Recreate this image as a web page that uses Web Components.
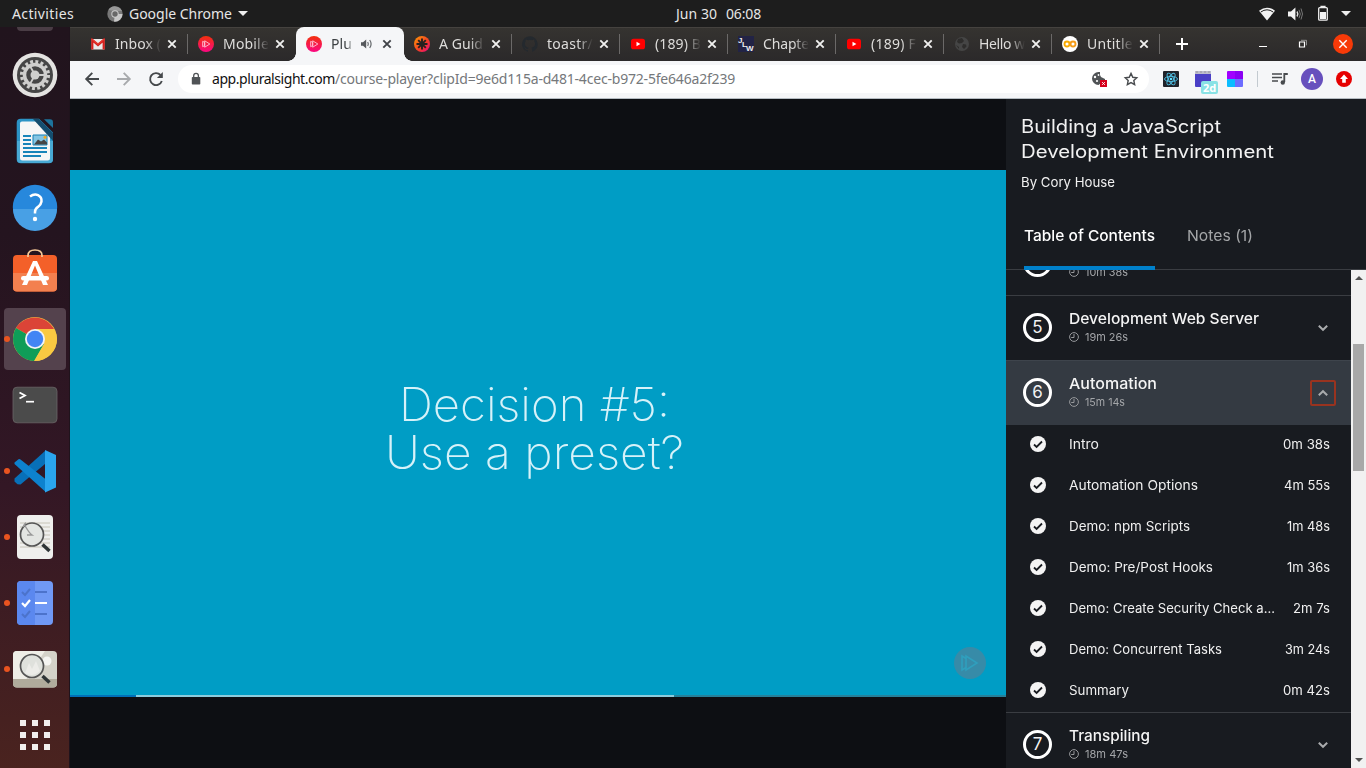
<!DOCTYPE html>
<html lang="en">
<head>
<meta charset="utf-8">
<title>Building a JavaScript Development Environment</title>
<style>
html,body{margin:0;height:100%;overflow:hidden;background:#0d0f13}
</style>
</head>
<body>
<desktop-shell></desktop-shell>
<script>
// Registers a component whose shadow root is produced by render(element).
function component(tag, render) {
  customElements.define(tag, class extends HTMLElement {
    constructor() { super(); this.attachShadow({ mode: 'open' }); }
    connectedCallback() {
      if (this.shadowRoot.firstChild) return;
      const t = document.createElement('template');
      t.innerHTML = '<style>*{box-sizing:border-box}svg{display:block;flex:none;overflow:visible}</style>' + render(this);
      this.shadowRoot.append(t.content.cloneNode(true));
    }
  });
}
const at = (el, n, d = '') => el.getAttribute(n) ?? d;

component('desktop-shell', () => `
<style>
:host{display:grid;grid-template:27px 741px / 70px 1296px;width:1366px;height:768px;overflow:hidden}
system-bar{grid-column:1 / 3}
</style>
<system-bar></system-bar><app-dock></app-dock><browser-window></browser-window>`);

component('system-bar', () => `
<style>
:host{display:grid;grid-template-columns:605px 1fr auto;align-items:center;height:27px;background:#1d1d1d;color:#e6e6e6;font:14px/26px "Noto Sans","Open Sans",sans-serif}
.l{display:flex;align-items:center;padding-left:12px}
.l svg.c{margin:0 6px 0 33px}.l svg.a{margin-left:6px}
.m{display:flex;gap:9px;padding-left:71px}
.r{display:flex;align-items:center;justify-content:flex-end;padding-right:15px}
</style>
<div class="l"><fit-text w="62">Activities</fit-text>
<svg class="c" width="16" height="16" viewBox="0 0 16 16"><circle cx="8" cy="8" r="7.7" fill="#777"/><path d="M8 8h7.5A7.7 7.7 0 0 1 7 15.6z" fill="#c7c7c7"/><path d="M1.4 4A7.7 7.7 0 0 1 15 5H8z" fill="#979797"/><circle cx="8" cy="8" r="3.7" fill="#ccc"/><circle cx="8" cy="8" r="2.7" fill="#686868"/></svg>
<fit-text w="103">Google Chrome</fit-text>
<svg class="a" width="10" height="5" viewBox="0 0 10 5"><path d="M0 0h10L5 5z" fill="#eee"/></svg></div>
<div class="m"><fit-text w="41">Jun 30</fit-text><fit-text w="35">06:08</fit-text></div>
<div class="r">
<svg width="16" height="14" viewBox="0 0 16 14"><path d="M0 3.7Q8-2.4 16 3.7L8 13.5z" fill="#f2f2f2"/><path d="M1.8 5Q8 .6 14.2 5" fill="none" stroke="#1d1d1d" stroke-width="1"/></svg>
<svg style="margin-left:13px" width="15" height="14" viewBox="0 0 15 14"><path d="M0 4.5h3L7.4.5v13L3 9.5H0z" fill="#f2f2f2"/><path d="M9 4.5q1.6 2.5 0 5" fill="none" stroke="#ddd" stroke-width="1.4"/><path d="M11 2.8q2.6 4.2 0 8.4M13 1.5q3 5.5 0 11" fill="none" stroke="#777" stroke-width="1"/></svg>
<svg style="margin-left:15px" width="10" height="15" viewBox="0 0 10 15"><path d="M3 1.4V.4h4v1" fill="none" stroke="#eee" stroke-width="1.2"/><rect x=".7" y="1.6" width="8.6" height="12.6" rx="1" fill="none" stroke="#eee" stroke-width="1.3"/><path d="M2 6h6v7H2z" fill="#f2f2f2"/></svg>
<svg style="margin-left:13px" width="10" height="5" viewBox="0 0 10 5"><path d="M0 0h10L5 5z" fill="#eee"/></svg></div>`);

const dockIcons = {
settings: `<circle cx="22" cy="22" r="22.3" fill="#e4e3e1"/><circle cx="22" cy="22" r="18" fill="#464646"/><circle cx="22" cy="22" r="13.4" fill="none" stroke="#cfcfcd" stroke-width="3.3" stroke-dasharray="2.9 2.36"/><circle cx="22" cy="22" r="10.5" fill="none" stroke="#cfcfcd" stroke-width="3.5"/><circle cx="22" cy="22" r="4.5" fill="#cfcfcd"/><path d="M22 22h10M22 22l-5-9M22 22l-5 9" stroke="#cfcfcd" stroke-width="1.8"/>`,
writer: `<path d="M7.500-.3h18.500L40 13.500V40.200a4 4 0 0 1-4 4H7.700a4 4 0 0 1-4-4V3.700a4 4 0 0 1 4-4z" fill="#2b93c5"/><path d="M4 22h36v18a4 4 0 0 1-4 4H8a4 4 0 0 1-4-4z" fill="#48a9d4"/><path d="M9 2.500h16L37 14.800V39a2.500 2.500 0 0 1-2.500 2.500h-25A2.500 2.500 0 0 1 7 39V4.500a2 2 0 0 1 2-2z" fill="#f6f6f6"/><path d="M26 0l14 14V22L20 0z" fill="#154d6e"/><path d="M31 .2h6a3 3 0 0 1 3 3V9z" fill="#1d749d"/><path d="M10 17h8M10 21h8M10 25h8M10 29h24M10 33h24M10 37h18" stroke="#1884b9" stroke-width="1.8"/><path d="M20 16h14v10H20z" fill="#83c5e3" stroke="#1680b4"/><path d="M21 25.500l4-5 3 2 3-2 3 3v2z" fill="#454545"/><circle cx="32" cy="18.300" r="1.500" fill="#f3a71f"/>`,
help: `<circle cx="22" cy="22" r="22.2" fill="#2788dc"/><path d="M0 24h44a22 22 0 0 1-44 0z" fill="#48a0e5"/><path d="M17 11.500q4-3 8-1.400 4 2 3.500 6.400-.4 3-3.500 5.400-3 2-3 5v1.500" fill="none" stroke="#fff" stroke-width="2.500"/><circle cx="22" cy="34" r="2.200" fill="#fff"/>`,
store: `<rect y="4" width="44" height="36.500" rx="4" fill="#f46029"/><path d="M0 22h44v14.500a4 4 0 0 1-4 4H4a4 4 0 0 1-4-4z" fill="#f3804f"/><path d="M15 6v-1.500Q15-1 22-1t7 5.500V6" fill="none" stroke="#f6c998" stroke-width="1.700"/><path d="M9 34L20 10h4l11 24h-5L22 14.500 14 34z" fill="#fff"/><rect x="8" y="25" width="28" height="4.500" rx="2.200" fill="#fff"/>`,
chrome: `<circle cx="22" cy="22" r="22" fill="#f9c942"/><path d="M22 22L3 11A22 22 0 0 1 41 12H22z" fill="#db4437"/><path d="M22 22L3 11A22 22 0 0 0 21 44l10-17z" fill="#0f9d58"/><path d="M22 12h19Q44 17 44 22A22 22 0 0 1 21.500 44L31 27z" fill="#f9c942"/><circle cx="22" cy="22" r="10" fill="#f2f3f5"/><circle cx="22" cy="22" r="8.200" fill="#4285f4"/>`,
terminal: `<rect y="4.200" width="44" height="35.600" rx="4" fill="#4b4b4b" stroke="#6b6667" stroke-width=".8"/><path d="M6.500 9.500L12 12.500l-5.500 3" fill="none" stroke="#fff" stroke-width="1.800"/><path d="M13 18.700h8" stroke="#fff" stroke-width="1.700"/>`,
code: `<path d="M32 2L1.500 29.500v3l3 2.700 3 .4L32 15z" fill="#0870b8"/><path d="M1.500 13.500l4-3.300q1-.5 2 .2L33 30.500v12.700L1.500 15z" fill="#0d82ce"/><path d="M32 1l11 5v32.500l-11 5z" fill="#2aa5ee"/>`,
viewer: `<rect x="4" width="36" height="44" rx="4" fill="#efefed"/><path d="M7 8h30M7 12h30M7 16h30M7 20h30M7 24h30M7 28h30M7 32h30" stroke="#c7c4b8"/><circle cx="19" cy="19.500" r="11.500" fill="#e3e5e2" stroke="#555" stroke-width="1.700"/><path d="M11 9q5 9 8 11h-5M10 12q2-4 3-4" fill="none" stroke="#999" stroke-width="1.400"/><path d="M29.500 29.500l7 6.500" stroke="#2e3436" stroke-width="3.500"/>`,
todo: `<rect x="4" width="36" height="44" rx="4" fill="#7099f5"/><path d="M8 0h14v44H8a4 4 0 0 1-4-4V4a4 4 0 0 1 4-4z" fill="#5b88ef"/><path d="M9 11l3 3 5-6M9 33l3 3 5-6M22 11h12M22 33h12" fill="none" stroke="#4c73cb" stroke-width="2"/><path d="M9 22l3 3 5-6M22 22h12" fill="none" stroke="#fff" stroke-width="2.200"/>`,
image: `<rect y="4" width="44" height="36.500" rx="4" fill="#d4d2c9"/><path d="M4 4h28L12 34H0V8a4 4 0 0 1 4-4z" fill="#efeee7"/><path d="M0 32h44v4.500a4 4 0 0 1-4 4H4a4 4 0 0 1-4-4z" fill="#b0ab9c"/><circle cx="34" cy="14" r="4.500" fill="#f5f5f2"/><circle cx="19" cy="19" r="11.500" fill="#dfe1dc" stroke="#555" stroke-width="1.700"/><path d="M12 26l4-10 3 6 4-8 4 10q-7 7-15 2z" fill="#ecece8"/><path d="M29.500 29l7 6.500" stroke="#2e3436" stroke-width="3.500"/>`,
apps: `<path d="M7 7h6v6H7zM19 7h6v6h-6zM31 7h6v6h-6zM7 19h6v6H7zM19 19h6v6h-6zM31 19h6v6h-6zM7 31h6v6H7zM19 31h6v6h-6zM31 31h6v6h-6z" fill="#f2f0ee"/>`
};
component('dock-item', el => `
<style>
:host{display:grid;grid-template-columns:4px 62px 4px;align-items:center;height:66px}
.tile{grid-column:2;display:grid;place-items:center;height:62px;border-radius:4px;position:relative}
:host([active]) .tile{background:#54424d}
.dot{position:absolute;left:0;top:28px;width:6px;height:6px;border-radius:50%;background:#e95420}
:host(:not([running])) .dot{display:none}
</style><div class="tile"><span class="dot"></span><svg width="44" height="44" viewBox="0 0 44 44">${dockIcons[at(el,'icon')]}</svg></div>`);
component('app-dock', () => `
<style>
:host{display:block;height:741px;background:linear-gradient(#21141d,#24141f 28%,#331725 62%,#4a231f);overflow:hidden;border-right:1px solid #1f131c}
.peek{width:36px;height:4px;background:#4a3d45;border-radius:0 0 5px 5px;margin:0 0 11px 17px}
dock-item{width:70px}
</style><div class="peek"></div>
<dock-item icon="settings"></dock-item><dock-item icon="writer"></dock-item><dock-item icon="help"></dock-item><dock-item icon="store"></dock-item>
<dock-item icon="chrome" active running></dock-item><dock-item icon="terminal"></dock-item><dock-item icon="code" running></dock-item>
<dock-item icon="viewer" running></dock-item><dock-item icon="todo" running></dock-item><dock-item icon="image" running></dock-item><dock-item icon="apps"></dock-item>`);

const ps = `<defs><linearGradient id="g" x2="0" y2="1"><stop stop-color="#f2300c"/><stop offset="1" stop-color="#fb0782"/></linearGradient></defs><circle cx="8" cy="8" r="8" fill="url(#g)"/><path d="M4.700 5.300v5.400l2-1.200V6.500zM6.700 4.800v6.400l5.100-3.200z" fill="none" stroke="#ffc4d8" stroke-width=".9"/>`;
const yt = `<rect x="1" y="2.700" width="14" height="10.600" rx="2.600" fill="#f00"/><path d="M6.500 5.700v4.600L10.400 8z" fill="#fff"/>`;
const favicons = {
gmail: `<path d="M1.500 3h13v10.500h-13z" fill="#e9e9e9"/><path d="M2.300 13.500V4.200L8 9l5.700-4.800v9.300" fill="none" stroke="#d5201d" stroke-width="2.200"/><path d="M1.800 3L8 8l6.200-5" fill="none" stroke="#e53a31" stroke-width="1.400"/>`,
ps, yt,
guide: `<defs><linearGradient id="g" x2="1" y2="1"><stop stop-color="#ff9c00"/><stop offset=".6" stop-color="#f23a2b"/><stop offset="1" stop-color="#ec008c"/></linearGradient></defs><circle cx="8" cy="8" r="8" fill="url(#g)"/><path d="M8 2.500v11M2.500 8h11M4.200 4.200l7.600 7.600M11.800 4.200l-7.600 7.600" stroke="#26211f" stroke-width="1.900"/>`,
github: `<path d="M8 .2a8 8 0 0 0-2.500 15.600c.4.100.5-.2.500-.4v-1.500c-2.200.5-2.700-1-2.700-1-.4-.9-.9-1.200-.9-1.200-.7-.5 0-.5 0-.5.8.100 1.300.8 1.300.8.7 1.300 1.900.9 2.300.7.100-.5.300-.9.500-1.100-1.800-.2-3.600-.9-3.600-4 0-.9.300-1.600.8-2.100-.1-.2-.4-1 .1-2.100 0 0 .7-.2 2.200.8a7.500 7.500 0 0 1 4 0c1.500-1 2.200-.8 2.200-.8.4 1.100.2 1.900.1 2.100.5.600.8 1.300.8 2.100 0 3.100-1.900 3.800-3.700 4 .3.300.6.800.6 1.500v2.200c0 .2.100.5.500.4A8 8 0 0 0 8 .2z" fill="#24292e"/>`,
jlw: `<rect width="16" height="16" fill="#222345"/><g font-family="Liberation Sans,sans-serif" font-weight="700" fill="#eee" font-size="8"><text x="0" y="7">J</text><text x="4" y="11">L</text><text x="8" y="15">W</text></g>`,
globe: `<circle cx="8" cy="8" r="7" fill="#454545"/><path d="M4 3l4-1 2 3-2 2-3 .5L3 6zM9 8l3 .5.5 2L10 13l-2-2zM2 9l3 2v2z" fill="#2e2d2c"/>`,
colab: `<circle cx="8" cy="8" r="8" fill="#fff"/><circle cx="5" cy="8" r="2.500" fill="none" stroke="#f9ab00" stroke-width="1.900"/><circle cx="11" cy="8" r="2.500" fill="none" stroke="#f59c1a" stroke-width="1.900"/>`
};
component('browser-tab', el => `
<style>
:host{display:flex;align-items:center;width:108px;height:34px;padding:0 10px;position:relative;color:#dedddb;font:14px/34px "Noto Sans","Open Sans",sans-serif}
.t{width:46px;margin:0 6px 0 9px;overflow:hidden;white-space:nowrap;-webkit-mask-image:linear-gradient(90deg,#000 66%,transparent);mask-image:linear-gradient(90deg,#000 66%,transparent)}
.sep{position:absolute;right:0;top:7px;width:1px;height:20px;background:#6b6968}
:host([nosep]) .sep{display:none}
:host([active]){color:#3c4043;background:#f5f6f8;border-radius:8px 8px 0 0;z-index:1}
:host([active]) .t{width:23px;margin-right:7px}
.x{stroke:#f0f0ef}:host([active]) .x{stroke:#404348}
.flare{position:absolute;bottom:0;width:8px;height:8px}
.flare.a{left:-8px;background:radial-gradient(circle at 0 0,transparent 7.500px,#f5f6f8 8px)}
.flare.b{right:-8px;background:radial-gradient(circle at 100% 0,transparent 7.500px,#f5f6f8 8px)}
:host(:not([active])) .flare{display:none}
</style>
<span class="flare a"></span><span class="flare b"></span>
<svg width="16" height="16" viewBox="0 0 16 16">${favicons[at(el,'icon')]}</svg>
<span class="t"><slot></slot></span>
${el.hasAttribute('active') ? '<svg style="margin-right:10px" width="11" height="10" viewBox="0 0 11 10"><path d="M0 3.300h2L5.200.4v9.200L2 6.700H0z" fill="#55585c"/><path d="M6.700 3q1.300 2 0 4M8.700 1q2.800 4 0 8" fill="none" stroke="#65686c" stroke-width="1.200"/></svg>' : ''}
<svg class="x" width="10" height="10" viewBox="0 0 10 10"><path d="M1.300 1.300l7.400 7.400M8.700 1.300L1.300 8.700" stroke-width="1.900"/></svg><span class="sep"></span>`);

component('tab-strip', () => `
<style>
:host{display:flex;align-items:center;height:34px;background:linear-gradient(#45423f 0 1px,#353330 1px,#2b292a);padding-left:10px}
.add{margin-left:16px}.min{margin-left:71px}.res{margin-left:32px}.cls{margin-left:26px}
</style>
<browser-tab icon="gmail"><fit-text w="46">Inbox (</fit-text></browser-tab>
<browser-tab icon="ps" nosep><fit-text w="46">Mobile</fit-text></browser-tab>
<browser-tab icon="ps" active nosep><fit-text w="21">Plu</fit-text></browser-tab>
<browser-tab icon="guide"><fit-text w="44">A Guid</fit-text></browser-tab>
<browser-tab icon="github"><fit-text w="46">toastr/</fit-text></browser-tab>
<browser-tab icon="yt"><fit-text w="46">(189) B</fit-text></browser-tab>
<browser-tab icon="jlw"><fit-text w="46">Chapte</fit-text></browser-tab>
<browser-tab icon="yt"><fit-text w="45">(189) F</fit-text></browser-tab>
<browser-tab icon="globe"><fit-text w="46">Hello w</fit-text></browser-tab>
<browser-tab icon="colab"><fit-text w="46">Untitle</fit-text></browser-tab>
<svg class="add" width="12" height="12" viewBox="0 0 12 12"><path d="M6 0v12M0 6h12" stroke="#fff" stroke-width="2"/></svg>
<svg class="min" width="8" height="8" viewBox="0 0 8 8"><path d="M0 6.500h8" stroke="#fff"/></svg>
<svg class="res" width="8" height="8" viewBox="0 0 8 8"><path d="M.5 2h5v5h-5z" fill="none" stroke="#fff" stroke-width="1.200"/><path d="M2 .3h5.500v5" fill="none" stroke="#aaa" stroke-width=".8"/></svg>
<svg class="cls" width="20" height="20" viewBox="0 0 20 20"><circle cx="10" cy="10" r="10" fill="#f73a08"/><path d="M6.300 6.300l7.400 7.400M13.700 6.300l-7.400 7.400" stroke="#fff" stroke-width="1.400"/></svg>`);

component('tool-button', () => `<style>:host{display:grid;place-items:center;width:32px;height:32px;flex:none;position:relative}</style><slot></slot>`);
component('tool-bar', () => `
<style>
:host{display:flex;align-items:center;height:38px;padding:0 6px 2px;background:#f5f6f8;border-bottom:1px solid #b5bcc2;font:14px/28px "Noto Sans","Open Sans",sans-serif}
.omni{display:flex;align-items:center;width:971px;height:28px;margin:0 6px;padding:0 2px 0 13px;background:#fff;border-radius:14px;color:#75787b}
.omni b{font-weight:400;color:#111;margin-left:11px}.omni .sp{flex:1}
.sep{width:1px;height:16px;background:#c3cad0;margin:0 6px}
.badge{position:absolute;left:14px;top:18px;width:17px;height:13px;background:#89e2e5;border-radius:2px;color:#fff;font:700 11px/13px "Noto Sans",sans-serif;text-align:center}
.av{width:22px;height:22px;border-radius:50%;background:#6750bd;color:#fff;font:500 12px/22px Roboto,sans-serif;text-align:center}
</style>
<tool-button><svg width="14" height="14" viewBox="0 0 14 14"><path d="M14 7H1.500M7.300.8L1.200 7l6.100 6.200" fill="none" stroke="#45484b" stroke-width="1.900"/></svg></tool-button>
<tool-button><svg width="14" height="14" viewBox="0 0 14 14"><path d="M0 7h12.500M6.700.8L12.800 7l-6.100 6.200" fill="none" stroke="#a8aaad" stroke-width="1.900"/></svg></tool-button>
<tool-button><svg width="14" height="14" viewBox="0 0 14 14"><path d="M11.500 3A6 6 0 1 0 12.800 9" fill="none" stroke="#45484b" stroke-width="1.900"/><path d="M13.800 0v6H7.900z" fill="#45484b"/></svg></tool-button>
<div class="omni"><svg width="10" height="12" viewBox="0 0 10 12"><rect x=".8" y="4" width="8.500" height="7.500" rx=".8" fill="#505356"/><path d="M2.700 4V2.800a2.350 2.350 0 0 1 4.700 0V4" fill="none" stroke="#505356" stroke-width="1.300"/></svg>
<b><fit-text w="123">app.pluralsight.com</fit-text></b><fit-text w="400">/course-player?clipId=9e6d115a-d481-4cec-b972-5fe646a2f239</fit-text><span class="sp"></span>
<tool-button><svg width="16" height="16" viewBox="0 0 16 16"><path d="M7.500 1a6.500 6.500 0 1 0 0 13l6.500-5V8l-2-1-2-1-1-2V1z" fill="#505356"/><circle cx="4" cy="6" r="1.200" fill="#fff"/><circle cx="7.500" cy="4" r=".9" fill="#fff"/><circle cx="6" cy="10" r="1.100" fill="#fff"/><rect x="9" y="9" width="7" height="7" fill="#d6001c"/><path d="M11.200 11.200l2.600 2.600M13.800 11.200l-2.600 2.600" stroke="#fff"/></svg></tool-button>
<tool-button><svg width="14" height="14" viewBox="0 0 15 15"><path d="M7.500 1.500l1.900 4.100 4.300.5-3.200 3 .9 4.400-3.900-2.200-3.900 2.200.9-4.400-3.200-3 4.300-.5z" fill="none" stroke="#484b4e" stroke-width="1.500"/></svg></tool-button></div>
<tool-button><svg width="16" height="16" viewBox="0 0 16 16"><rect width="16" height="16" rx="1" fill="#20232a"/><g fill="none" stroke="#4fc3e8" stroke-width=".9"><ellipse cx="8" cy="8" rx="6.500" ry="2.600"/><ellipse cx="8" cy="8" rx="6.500" ry="2.600" transform="rotate(60 8 8)"/><ellipse cx="8" cy="8" rx="6.500" ry="2.600" transform="rotate(120 8 8)"/></g><circle cx="8" cy="8" r="1.300" fill="#61dafb"/></svg></tool-button>
<tool-button><svg width="16" height="16" viewBox="0 0 16 16"><path d="M0 0h16v3H0z" fill="#bdbccc"/><path d="M2 0v2M6 0v2M10 0v2M14 0v2" stroke="#888" stroke-width=".7"/><path d="M0 3h16v12a1 1 0 0 1-1 1H1a1 1 0 0 1-1-1z" fill="#4a3fc6"/></svg><span class="badge">2d</span></tool-button>
<tool-button><svg width="16" height="16" viewBox="0 0 16 16"><path d="M0 8V1q0-1 1-1h7v8z" fill="#a100ff"/><path d="M8 0h7q1 0 1 1v7H8z" fill="#8a00f3"/><path d="M0 8h8v8H1q-1 0-1-1z" fill="#0bbcff"/><path d="M8 8h8v7q0 1-1 1H8z" fill="#6c6cff"/></svg></tool-button>
<span class="sep"></span>
<tool-button><svg width="16" height="13" viewBox="0 0 16 13"><path d="M0 2h10M0 5.500h10M0 9h6" stroke="#484b4e" stroke-width="1.600"/><path d="M12.300 10V2h3.500" fill="none" stroke="#484b4e" stroke-width="1.800"/><circle cx="10.800" cy="10.500" r="2.200" fill="#484b4e"/></svg></tool-button>
<tool-button><span class="av">A</span></tool-button>
<tool-button><svg width="16" height="16" viewBox="0 0 16 16"><circle cx="8" cy="8" r="8" fill="#e60000"/><path d="M8 3.500L12 8H9.800v3.700H6.200V8H4z" fill="#fff"/></svg></tool-button>`);

component('browser-window', () => `
<style>:host{display:grid;grid-template-rows:34px 38px 669px;background:#f5f6f8}.page{display:grid;grid-template-columns:936px 360px}</style>
<tab-strip></tab-strip><tool-bar></tool-bar><div class="page"><video-player></video-player><course-panel></course-panel></div>`);

component('video-player', () => `
<style>
:host{display:flex;flex-direction:column;height:669px;background:#0d0f13;padding-top:71px}
.slide{position:relative;height:525px;background:#009dc5;display:flex;flex-direction:column;align-items:flex-start;padding-top:210px;color:#d6f2f9;font:250 46px/48px Inter,sans-serif}
.slide fit-text:first-child{margin-left:329px}.slide fit-text:nth-child(2){margin-left:315px}
.mark{position:absolute;left:883px;top:476px}
.bar{display:flex;height:2px}.bar i:nth-child(1){width:66px;background:#0070b8}.bar i:nth-child(2){width:538px;background:#8ccbdc}.bar i:nth-child(3){flex:1;background:#26809a}
</style>
<div class="slide"><fit-text w="271" stretch>Decision #5:</fit-text><fit-text w="299" stretch>Use a preset?</fit-text>
<svg class="mark" width="34" height="34" viewBox="0 0 34 34"><circle cx="17" cy="17" r="16" fill="#378ba8"/><path d="M9 10v14l4-2.500v-9zM13 10v14l11-7z" fill="none" stroke="#2f9fbd" stroke-width="1.600"/></svg></div>
<div class="bar"><i></i><i></i><i></i></div>`);

component('course-module', el => `
<style>
:host{display:grid;grid-template-columns:29px 1fr 26px;column-gap:17px;align-items:center;height:65px;padding:0 15px 0 17px;border-top:1px solid #3a3d42}
:host([open]){background:#343a42;border-color:#3e444c}
.n{width:29px;height:29px;border:3px solid #fff;border-radius:50%;text-align:center;font:400 17px/23px Inter,sans-serif;color:#f2f2f2;margin-top:-1px}
.h{font:500 15px/19px Inter,sans-serif;color:#f4f4f4;margin-top:-3px}
.d{display:flex;align-items:center;gap:6px;font:400 11px/16px Inter,sans-serif;color:#a3a5a8;margin-top:1px}
.b{display:grid;place-items:center;width:26px;height:26px;border-radius:2px;border:2px solid transparent}
:host([open]) .b{border-color:#99331f}:host([open]) .b svg{transform:rotate(180deg)}
</style>
<div class="n">${at(el,'n')}</div>
<div><div class="h"><fit-text stretch w="${at(el,'tw')}">${at(el,'name')}</fit-text></div>
<div class="d"><svg width="10" height="10" viewBox="0 0 10 10"><circle cx="5" cy="5" r="4.400" fill="none" stroke="#96989b"/><path d="M5 2v3.500H2.200" fill="none" stroke="#96989b"/></svg><fit-text stretch w="${at(el,'dw')}">${at(el,'time')}</fit-text></div></div>
<div class="b"><svg width="10" height="6" viewBox="0 0 10 6"><path d="M.8.8L5 4.800 9.200.8" fill="none" stroke="#a9abad" stroke-width="2"/></svg></div>`);

component('course-clip', el => `
<style>
:host{display:flex;align-items:center;height:41px;padding:0 21px 3px 24px;font:400 13px/20px Inter,sans-serif;color:#f0f0f0}
svg{margin-right:23px}.sp{flex:1}
fit-text{margin-top:-1px}
</style>
<svg width="16" height="16" viewBox="0 0 16 16"><circle cx="8" cy="8" r="8" fill="#f4f4f4"/><path d="M4 8.500l2.600 2.500 5.400-5.500" fill="none" stroke="#181b20" stroke-width="1.800"/></svg>
<fit-text stretch w="${at(el,'tw')}">${at(el,'name')}</fit-text><span class="sp"></span><fit-text stretch w="${at(el,'dw')}">${at(el,'time')}</fit-text>`);

component('scroll-bar', () => `
<style>:host{display:flex;flex-direction:column;align-items:center;width:15px;height:498px;background:#f1f1f1;padding:6px 0 6px}
.th{width:11px;height:127px;background:#a8a8a8;margin:64px 0 auto 0}</style>
<svg width="8" height="4" viewBox="0 0 8 4"><path d="M0 4h8L4 0z" fill="#505050"/></svg><div class="th"></div><svg width="8" height="4" viewBox="0 0 8 4"><path d="M0 0h8L4 4z" fill="#505050"/></svg>`);

component('course-panel', () => `
<style>
:host{display:block;height:669px;background:#181b20;color:#f2f2f2;font-family:Inter,sans-serif;overflow:hidden}
header{height:171px;padding:15px 15px 0;border-bottom:1px solid #3a3d42}
h1{display:flex;flex-direction:column;margin:0;font:400 18px/25px Inter,sans-serif}
.by{font-size:13px;line-height:20px;margin-top:8px}
nav{display:flex;gap:32px;margin:32px 0 0 3px;font-size:15px;line-height:24px}
nav span{height:46px;color:#a3a5a7}nav .on{color:#fff;font-weight:550;border-bottom:4px solid #0080ca}
.body{display:grid;grid-template-columns:345px 15px;height:498px}
.list{height:498px;overflow:hidden}.list course-module:first-child{margin-top:-40px}
</style>
<header><h1><fit-text stretch w="200">Building a JavaScript</fit-text><fit-text stretch w="253">Development Environment</fit-text></h1>
<div class="by"><fit-text stretch w="94">By Cory House</fit-text></div>
<nav><span class="on"><fit-text stretch w="131">Table of Contents</fit-text></span><span><fit-text stretch w="66">Notes (1)</fit-text></span></nav></header>
<div class="body"><div class="list">
<course-module n="4" name="Package Management" tw="170" time="10m 38s" dw="43"></course-module>
<course-module n="5" name="Development Web Server" tw="190" time="19m 26s" dw="43"></course-module>
<course-module n="6" name="Automation" tw="88" time="15m 14s" dw="40" open></course-module>
<course-clip name="Intro" tw="30" time="0m 38s" dw="47"></course-clip>
<course-clip name="Automation Options" tw="129" time="4m 55s" dw="46"></course-clip>
<course-clip name="Demo: npm Scripts" tw="121" time="1m 48s" dw="43"></course-clip>
<course-clip name="Demo: Pre/Post Hooks" tw="144" time="1m 36s" dw="43"></course-clip>
<course-clip name="Demo: Create Security Check a..." tw="206" time="2m 7s" dw="37"></course-clip>
<course-clip name="Demo: Concurrent Tasks" tw="153" time="3m 24s" dw="45"></course-clip>
<course-clip name="Summary" tw="60" time="0m 42s" dw="47"></course-clip>
<course-module n="7" name="Transpiling" tw="81" time="18m 47s" dw="43"></course-module>
</div><scroll-bar></scroll-bar></div>`);

// A label that takes the given width: by tracking, or by wider letterforms when "stretch" is set.
customElements.define('fit-text', class extends HTMLElement {
  constructor() {
    super();
    this.attachShadow({ mode: 'open' }).innerHTML = '<style>:host{display:inline-block;white-space:pre;vertical-align:top}span{display:inline-block;transform-origin:0 0}</style><span><slot></slot></span>';
  }
  connectedCallback() {
    const w = +this.getAttribute('w'), span = this.shadowRoot.querySelector('span');
    const natural = span.getBoundingClientRect().width;
    if (w && natural) {
      if (this.hasAttribute('stretch')) span.style.transform = `scaleX(${(w / natural).toFixed(4)})`;
      else span.style.letterSpacing = ((w - natural) / this.textContent.length).toFixed(3) + 'px';
    }
    this.style.width = w + 'px';
  }
});
</script>
</body>
</html>
